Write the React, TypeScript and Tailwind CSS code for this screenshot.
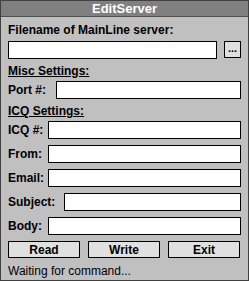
import React from "react";

const font = { fontFamily: '"Liberation Sans", Arial, sans-serif' };

function Field({ label, labelW }: { label: string; labelW: string }) {
  return (
    <div className="flex h-[18px] items-center">
      <div className={`${labelW} shrink-0 text-[12px] font-bold leading-none text-black`}>{label}</div>
      <div className="h-[18px] flex-1 border border-black bg-white" />
    </div>
  );
}

export default function App() {
  return (
    <div className="flex h-[281px] w-[249px] flex-col border border-[#404040] bg-[#c0c0c0]" style={font}>
      <div className="flex h-[16px] shrink-0 items-center justify-center border-b border-[#505050] bg-[#808080] text-[13px] font-bold leading-none text-white">
        EditServer
      </div>
      <div className="flex flex-1 flex-col pl-[7px] pr-[7px]">
        <div className="flex h-[24px] items-end pb-[5px] text-[12px] font-bold leading-none text-black">
          Filename of MainLine server:
        </div>
        <div className="flex h-[18px] items-start">
          <div className="h-[18px] w-[209px] border border-black bg-white" />
          <div className="ml-[7px] flex h-[17px] w-[17px] items-center justify-center border border-black bg-[#e0e0e0] text-[11px] font-bold leading-none text-black">
            <span className="-mt-[3px]">...</span>
          </div>
        </div>
        <div className="flex h-[22px] items-end pb-[4px] text-[12px] font-bold leading-none text-black underline underline-offset-1">
          Misc Settings:
        </div>
        <Field label="Port #:" labelW="w-[48px]" />
        <div className="flex h-[22px] items-end pb-[4px] text-[12px] font-bold leading-none text-black underline underline-offset-1">
          ICQ Settings:
        </div>
        <div className="flex flex-col gap-[6px]">
          <Field label="ICQ #:" labelW="w-[40px]" />
          <Field label="From:" labelW="w-[40px]" />
          <Field label="Email:" labelW="w-[40px]" />
          <Field label="Subject:" labelW="w-[56px]" />
          <Field label="Body:" labelW="w-[40px]" />
        </div>
        <div className="mt-[6px] flex h-[17px] gap-[8px]">
          {["Read", "Write", "Exit"].map((t) => (
            <div
              key={t}
              className="flex h-[17px] w-[72px] items-center justify-center border border-black bg-[#e0e0e0] text-[12px] font-bold leading-none text-black"
            >
              {t}
            </div>
          ))}
        </div>
        <div className="mt-[7px] text-[12px] leading-none text-black">Waiting for command...</div>
      </div>
    </div>
  );
}
